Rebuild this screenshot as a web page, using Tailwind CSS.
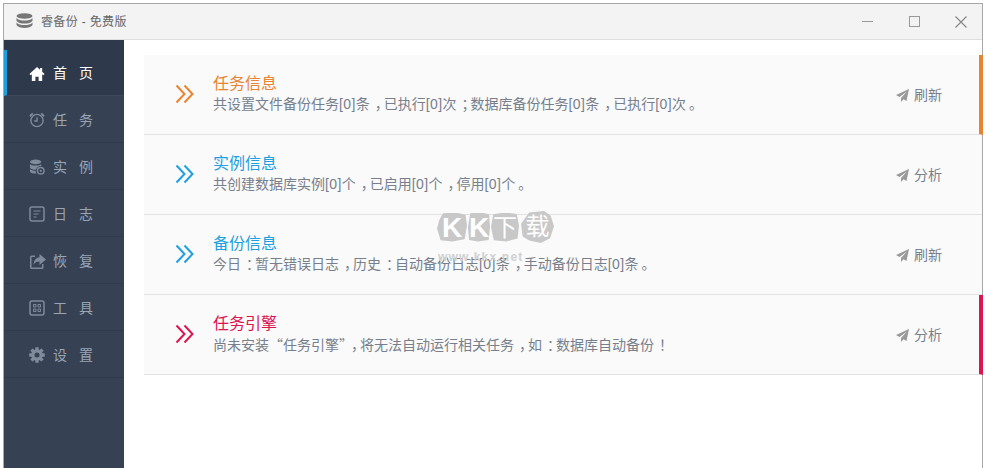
<!DOCTYPE html>
<html lang="zh"><head><meta charset="utf-8">
<script src="https://cdn.jsdelivr.net/npm/@tailwindcss/browser@4"></script>
</head>
<body class="bg-white overflow-hidden font-['Liberation_Sans','Noto_Sans_CJK_SC',sans-serif]">
<div class="relative w-[986px] h-[468px] pt-[3px] pl-[3px] pr-[3px]">
<div class="w-[980px] h-[465px] border-l border-t border-r border-[#a8a8a8] flex flex-col">
  <header class="h-[36px] shrink-0 bg-[#f3f3f3] border-b border-[#dedede] flex items-center pl-3 text-[#666]">
    <svg class="w-[17px] h-[17px] mr-[7px]" viewBox="0 0 17 17" fill="#777"><ellipse cx="8.500" cy="3" rx="8" ry="2.800"/><path d="M.5 5c1.500 1.900 4.500 2.500 8 2.500s6.500-.6 8-2.500v2.700c-1 2-4.500 2.800-8 2.800s-7-.8-8-2.800z"/><path d="M.5 9c1.500 1.900 4.500 2.500 8 2.500s6.500-.6 8-2.500v2.700c-1 2-4.500 2.800-8 2.800s-7-.8-8-2.800z" transform="translate(0 .4)"/></svg>
    <span class="text-[12px] ml-[1px] tracking-[.35px]">睿备份 - 免费版</span>
    <div class="ml-auto flex items-center h-full">
      <svg class="w-[11px] h-[11px] mr-[36px]" viewBox="0 0 11 11"><path d="M0 5.500h11" stroke="#999" stroke-width="1"/></svg>
      <svg class="w-[11px] h-[11px] mr-[35px] -mt-[1px]" viewBox="0 0 11 11"><rect x=".5" y=".5" width="10" height="10" fill="none" stroke="#999"/></svg>
      <svg class="w-[12px] h-[12px] mr-[15px]" viewBox="0 0 12 12"><path d="M.5.500l11 11M11.500.500l-11 11" stroke="#888" stroke-width="1.200"/></svg>
    </div>
  </header>
  <div class="flex flex-1 min-h-0">
    <nav class="w-[120px] shrink-0 bg-[#364153] text-[14px] text-[#99a5b5]">
      <div class="h-[10px] bg-[#2e394b]"></div>
      <a class="h-[46px] pt-[2px] flex items-center bg-[#2e394b] border-l-[3px] border-[#1e9fdd] border-b border-b-[#3d4859] text-white pl-[22px]">
        <svg class="w-[16px] h-[16px]" viewBox="0 0 17 17" fill="#fff"><path d="M8.500 1 .5 8.500l1.300 1.300 1.200-1V16h3.800v-4.500h3.400V16H14V8.800l1.200 1 1.300-1.300-2.500-2.300V2h-2.200v2z"/></svg>
        <span class="ml-[8px] tracking-[12px] whitespace-nowrap">首页</span>
      </a>
      <a class="h-[47px] pt-[2px] flex items-center border-b border-[#2f3a4b] pl-[25px]">
        <svg class="w-[16px] h-[16px]" viewBox="0 0 17 17" fill="none" stroke="#7f8b9b" stroke-width="1.500"><circle cx="8.500" cy="9" r="6.500"/><path d="M8.500 5.500V9.500H5.500"/><path d="M1 4.500 4 1.500M16 4.500l-3-3" stroke-width="2"/></svg>
        <span class="ml-[8px] tracking-[12px] whitespace-nowrap">任务</span>
      </a>
      <a class="h-[47px] pt-[2px] flex items-center border-b border-[#2f3a4b] pl-[25px]">
        <svg class="w-[16px] h-[16px]" viewBox="0 0 17 17" fill="#7f8b9b"><ellipse cx="7" cy="3" rx="6" ry="2.500"/><path d="M1 5c1 1.500 3 2 6 2s5-.5 6-2v2.500C10 7.500 8 9 7.500 11.500 4 11.500 1.500 10.500 1 9zM1 10.500c1 1 3 1.800 6 2 0 1 .3 2 1 3-4 .2-7-1-7-2.500z"/><circle cx="12.500" cy="12.500" r="3.500" fill="none" stroke="#7f8b9b" stroke-width="1.500"/><circle cx="12.500" cy="12.500" r="1.200"/></svg>
        <span class="ml-[8px] tracking-[12px] whitespace-nowrap">实例</span>
      </a>
      <a class="h-[47px] pt-[2px] flex items-center border-b border-[#2f3a4b] pl-[25px]">
        <svg class="w-[16px] h-[16px]" viewBox="0 0 16 16" fill="none" stroke="#7f8b9b" stroke-width="1.500"><rect x="1" y="1" width="14" height="14" rx="2"/><path d="M4.500 5h7M4.500 8h5M4.500 11h3" stroke-width="1.200"/></svg>
        <span class="ml-[8px] tracking-[12px] whitespace-nowrap">日志</span>
      </a>
      <a class="h-[47px] pt-[2px] flex items-center border-b border-[#2f3a4b] pl-[25px]">
        <svg class="w-[17px] h-[17px] -mr-[1px]" viewBox="0 0 17 17" fill="#7f8b9b"><path d="M6 2.500H2.500A1.500 1.500 0 0 0 1 4v10.500A1.500 1.500 0 0 0 2.500 16H13a1.500 1.500 0 0 0 1.500-1.500V11H13v3.500H2.500V4H6z"/><path d="M10.500 1 17 6.500 10.500 12V8.500C7.500 8.500 5.500 9.500 4.500 12c0-4.500 2.500-7.500 6-7.800z"/></svg>
        <span class="ml-[8px] tracking-[12px] whitespace-nowrap">恢复</span>
      </a>
      <a class="h-[47px] pt-[2px] flex items-center border-b border-[#2f3a4b] pl-[25px]">
        <svg class="w-[16px] h-[16px]" viewBox="0 0 16 16" fill="none" stroke="#7f8b9b" stroke-width="1.500"><rect x="1" y="1" width="14" height="14" rx="2"/><path d="M4.500 4.500h2.500v2.500H4.500zM9 4.500h2.500v2.500H9zM4.500 9h2.500v2.500H4.500zM9 9h2.500v2.500H9z" stroke-width="1"/></svg>
        <span class="ml-[8px] tracking-[12px] whitespace-nowrap">工具</span>
      </a>
      <a class="h-[47px] pt-[2px] flex items-center border-b border-[#2f3a4b] pl-[25px]">
        <svg class="w-[16px] h-[16px]" viewBox="0 0 16 16" fill="#7f8b9b"><circle cx="8" cy="8" r="5.800"/><g><rect x="6.300" y=".2" width="3.400" height="15.600" rx=".5"/><rect x="6.300" y=".2" width="3.400" height="15.600" rx=".5" transform="rotate(45 8 8)"/><rect x="6.300" y=".2" width="3.400" height="15.600" rx=".5" transform="rotate(90 8 8)"/><rect x="6.300" y=".2" width="3.400" height="15.600" rx=".5" transform="rotate(135 8 8)"/></g><circle cx="8" cy="8" r="2.500" fill="#364153"/></svg>
        <span class="ml-[8px] tracking-[12px] whitespace-nowrap">设置</span>
      </a>
    </nav>
    <main class="flex-1 pt-[15px] pl-[20px]">
      <section class="h-[80px] -mr-[1px] bg-[#fafafa] border-b border-[#e2e2e2] border-r-[4px] border-r-[#e8842f] flex items-center pl-[31px] pr-[37px]">
        <svg class="w-[20px] h-[20px] shrink-0 -mt-[2px]" viewBox="0 0 20 20" fill="none" stroke="#e8842f" stroke-width="2"><path d="M1.500 1.500 9.500 10 1.500 18.500M9.500 1.500 17.500 10 9.500 18.500"/></svg>
        <div class="ml-[18px] -mt-[1px] whitespace-nowrap"><h2 class="text-[16px] leading-[20px] text-[#e8842f]">任务信息</h2><p class="text-[14px] leading-[20px] text-[#777f8c]">共设置文件备份任务<span class="tracking-[.4px]">[0]</span>条<span class="ml-[5px] -mr-[5px]">，</span>已执行<span class="tracking-[.4px]">[0]</span>次<span class="ml-[5px] -mr-[5px]">；</span>数据库备份任务<span class="tracking-[.4px]">[0]</span>条<span class="ml-[5px] -mr-[5px]">，</span>已执行<span class="tracking-[.4px]">[0]</span>次<span class="ml-[3px] -mr-[3px]">。</span></p></div>
        <div class="ml-auto mt-[2px] flex items-center text-[14px] text-[#777f8c]"><svg class="w-[13px] h-[13px] mr-[5px]" viewBox="0 0 13 13" fill="#999"><path d="M13 0 0 6l3.500 2L11 2.500 5 9v4l2.500-2.800L10.500 12z"/></svg>刷新</div>
      </section>
      <section class="h-[80px] bg-[#fafafa] border-b border-[#e2e2e2] flex items-center pl-[31px] pr-[40px]">
        <svg class="w-[20px] h-[20px] shrink-0 -mt-[2px]" viewBox="0 0 20 20" fill="none" stroke="#1e9fe0" stroke-width="2"><path d="M1.500 1.500 9.500 10 1.500 18.500M9.500 1.500 17.500 10 9.500 18.500"/></svg>
        <div class="ml-[18px] -mt-[1px] whitespace-nowrap"><h2 class="text-[16px] leading-[20px] text-[#1e9fe0]">实例信息</h2><p class="text-[14px] leading-[20px] text-[#777f8c]">共创建数据库实例<span class="tracking-[.4px]">[0]</span>个<span class="ml-[5px] -mr-[5px]">，</span>已启用<span class="tracking-[.4px]">[0]</span>个<span class="ml-[5px] -mr-[5px]">，</span>停用<span class="tracking-[.4px]">[0]</span>个<span class="ml-[3px] -mr-[3px]">。</span></p></div>
        <div class="ml-auto mt-[2px] flex items-center text-[14px] text-[#777f8c]"><svg class="w-[13px] h-[13px] mr-[5px]" viewBox="0 0 13 13" fill="#999"><path d="M13 0 0 6l3.500 2L11 2.500 5 9v4l2.500-2.800L10.500 12z"/></svg>分析</div>
      </section>
      <section class="h-[80px] bg-[#fafafa] border-b border-[#e2e2e2] flex items-center pl-[31px] pr-[40px]">
        <svg class="w-[20px] h-[20px] shrink-0 -mt-[2px]" viewBox="0 0 20 20" fill="none" stroke="#1e9fe0" stroke-width="2"><path d="M1.500 1.500 9.500 10 1.500 18.500M9.500 1.500 17.500 10 9.500 18.500"/></svg>
        <div class="ml-[18px] -mt-[1px] whitespace-nowrap"><h2 class="text-[16px] leading-[20px] text-[#1e9fe0]">备份信息</h2><p class="text-[14px] leading-[20px] text-[#777f8c]">今日<span class="ml-[5px] -mr-[5px]">：</span>暂无错误日志<span class="ml-[5px] -mr-[5px]">，</span>历史<span class="ml-[5px] -mr-[5px]">：</span>自动备份日志<span class="tracking-[.4px]">[0]</span>条<span class="ml-[5px] -mr-[5px]">，</span>手动备份日志<span class="tracking-[.4px]">[0]</span>条<span class="ml-[3px] -mr-[3px]">。</span></p></div>
        <div class="ml-auto mt-[2px] flex items-center text-[14px] text-[#777f8c]"><svg class="w-[13px] h-[13px] mr-[5px]" viewBox="0 0 13 13" fill="#999"><path d="M13 0 0 6l3.500 2L11 2.500 5 9v4l2.500-2.800L10.500 12z"/></svg>刷新</div>
      </section>
      <section class="h-[80px] -mr-[1px] bg-[#fafafa] border-b border-[#e2e2e2] border-r-[4px] border-r-[#dc1450] flex items-center pl-[31px] pr-[37px]">
        <svg class="w-[20px] h-[20px] shrink-0 -mt-[2px]" viewBox="0 0 20 20" fill="none" stroke="#dc1450" stroke-width="2"><path d="M1.500 1.500 9.500 10 1.500 18.500M9.500 1.500 17.500 10 9.500 18.500"/></svg>
        <div class="ml-[18px] -mt-[1px] whitespace-nowrap"><h2 class="text-[16px] leading-[20px] text-[#dc1450]">任务引擎</h2><p class="text-[14px] leading-[20px] text-[#777f8c]">尚未安装<span class="font-['Noto_Sans_CJK_SC']">“</span>任务引擎<span class="font-['Noto_Sans_CJK_SC']">”</span><span class="ml-[5px] -mr-[5px]">，</span>将无法自动运行相关任务<span class="ml-[5px] -mr-[5px]">，</span>如<span class="ml-[5px] -mr-[5px]">：</span>数据库自动备份<span class="ml-[5px] -mr-[5px]">！</span></p></div>
        <div class="ml-auto mt-[2px] flex items-center text-[14px] text-[#777f8c]"><svg class="w-[13px] h-[13px] mr-[5px]" viewBox="0 0 13 13" fill="#999"><path d="M13 0 0 6l3.500 2L11 2.500 5 9v4l2.500-2.800L10.500 12z"/></svg>分析</div>
      </section>
    </main>
  </div>
</div>
<div class="absolute left-[437px] top-[212px] flex items-center h-[30px]">
  <span class="w-[30px] h-[29px] bg-[#c8c8c8] text-white text-[28px] font-bold leading-[29px] text-center [clip-path:polygon(20%_3%,62%_0,95%_8%,100%_45%,92%_92%,50%_100%,12%_96%,0_55%,8%_25%)]">K</span>
  <span class="w-[22px] h-[29px] ml-[1px] bg-[#c8c8c8] text-white text-[28px] font-bold leading-[29px] text-center [clip-path:polygon(10%_3%,60%_0,96%_6%,100%_50%,94%_95%,45%_100%,5%_95%,0_50%)]">K</span>
  <span class="w-[28px] h-[29px] ml-[1px] bg-[#c8c8c8] text-white text-[24px] leading-[29px] text-center [clip-path:polygon(8%_6%,50%_0,92%_5%,100%_45%,95%_90%,55%_100%,10%_96%,0_50%)]">下</span>
  <span class="w-[33px] h-[32px] ml-[2px] bg-[#c8c8c8] text-white text-[24px] leading-[32px] text-center [clip-path:polygon(25%_5%,70%_0,90%_15%,100%_48%,88%_85%,60%_100%,25%_92%,5%_80%,0_40%)]">载</span>
</div>
<div class="absolute left-[438px] top-[251px] text-[12px] leading-[13px] font-bold text-[#d0d0d0] tracking-[1.200px]">www.kkx.net</div>
</div>
</body></html>
